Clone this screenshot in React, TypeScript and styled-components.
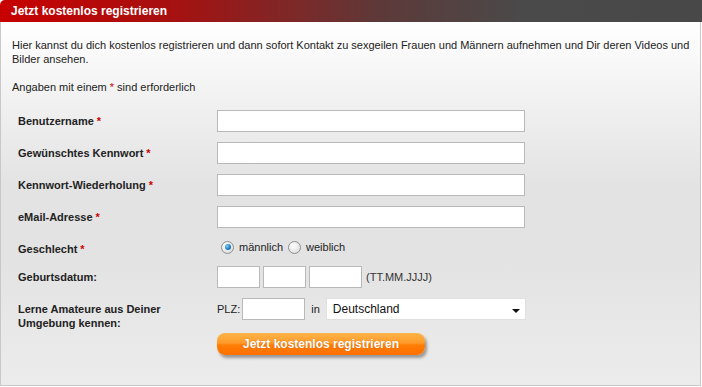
import React from 'react'
import styled, { createGlobalStyle } from 'styled-components'

const GlobalStyle = createGlobalStyle`
  html, body {
    margin: 0;
    padding: 0;
    background: #fff;
  }
  body {
    font-family: "Liberation Sans", Arial, sans-serif;
    font-size: 11px;
    color: #222;
  }
`

const Panel = styled.div`
  width: 702px;
  height: 387px;
  display: flex;
  flex-direction: column;
`

const Header = styled.div`
  height: 22px;
  padding-left: 11px;
  display: flex;
  align-items: center;
  border-top-left-radius: 5px;
  background: linear-gradient(to right, #c80000 0%, #a61111 25%, #5c3a3a 55%, #4a4a4a 75%, #484848 100%);
  color: #fff;
  font-weight: bold;
  font-size: 12px;
`

const Body = styled.div`
  flex: 1;
  margin-right: 1px;
  margin-bottom: 1px;
  border: 1px solid #c8c8c8;
  border-top: none;
  background: linear-gradient(to bottom, #ffffff 0%, #f2f2f2 20%, #e3e3e3 45%, #e3e3e3 65%, #ececec 100%);
  padding: 16px 11px 0 11px;
`

const Intro = styled.p`
  margin: 0 0 14px 0;
  line-height: 14px;
  width: 680px;
`

const Required = styled.span`
  color: #cc0000;
  margin-left: 3px;
`

const Note = styled.p`
  margin: 0 0 16px 0;
  line-height: 14px;
`

const FormGrid = styled.div`
  display: grid;
  grid-template-columns: 199px 1fr;
  row-gap: 10px;
  margin-left: 6px;
`

const Label = styled.div<{ $top?: number }>`
  font-weight: bold;
  line-height: 14px;
  display: flex;
  align-items: ${p => (p.$top !== undefined ? 'flex-start' : 'center')};
  padding-top: ${p => p.$top ?? 0}px;
`

const Field = styled.div<{ $start?: boolean }>`
  display: flex;
  align-items: center;
  align-self: ${p => (p.$start ? 'start' : 'stretch')};
`

const TextInput = styled.input<{ $w: number }>`
  box-sizing: border-box;
  width: ${p => p.$w}px;
  height: 22px;
  border: 1px solid #b9b9b9;
  background: #fff;
  margin: 0;
  padding: 0 3px;
  font: inherit;
`

const RadioRow = styled.div`
  height: 18px;
  display: flex;
  align-items: center;
  padding-left: 4px;
`

const RadioDot = styled.span<{ $checked?: boolean }>`
  box-sizing: border-box;
  width: 13px;
  height: 13px;
  border-radius: 50%;
  border: 1px solid #8e8f8f;
  background: radial-gradient(circle at 40% 35%, #ffffff 0%, #e6e6e6 60%, #cfcfcf 100%);
  display: flex;
  align-items: center;
  justify-content: center;
  margin-right: 5px;
  &::after {
    content: '';
    display: ${p => (p.$checked ? 'block' : 'none')};
    width: 6px;
    height: 6px;
    border-radius: 50%;
    background: radial-gradient(circle at 35% 35%, #7fd0f5 0%, #1b7fc0 55%, #0c4f86 100%);
  }
`

const RadioLabel = styled.span`
  margin-right: 5px;
`

const DateRow = styled.div`
  display: flex;
  align-items: center;
  gap: 3px;
`

const Hint = styled.span`
  margin-left: 1px;
  color: #333;
`

const Small = styled.span`
  margin: 0 2px 0 0;
`

const InWord = styled.span`
  margin: 0 6px 0 6px;
`

const SelectBox = styled.div`
  box-sizing: border-box;
  width: 200px;
  height: 22px;
  background: #fff;
  border: 1px solid #e0e0e0;
  display: flex;
  align-items: center;
  justify-content: space-between;
  padding: 0 5px 0 6px;
  font-size: 12px;
  color: #111;
`

const Arrow = styled.span`
  width: 0;
  height: 0;
  border-left: 4px solid transparent;
  border-right: 4px solid transparent;
  border-top: 4px solid #111;
  margin-top: 3px;
`

const SubmitButton = styled.button`
  width: 208px;
  height: 22px;
  margin-top: -7px;
  border: none;
  border-radius: 8px;
  background: linear-gradient(to bottom, #ffb54a 0%, #ff9a2a 45%, #ff7d05 55%, #ff7000 100%);
  box-shadow: 2px 3px 3px rgba(0, 0, 0, 0.35);
  color: #fff;
  font-family: "Liberation Sans", Arial, sans-serif;
  font-weight: bold;
  font-size: 12px;
  text-shadow: 0 0 1px rgba(140, 60, 0, 0.5);
  padding: 0;
  cursor: pointer;
`

const rows = ['Benutzername', 'Gewünschtes Kennwort', 'Kennwort-Wiederholung', 'eMail-Adresse']

const App = () => {
  return (
    <>
      <GlobalStyle />
      <Panel>
        <Header>Jetzt kostenlos registrieren</Header>
        <Body>
          <Intro>
            Hier kannst du dich kostenlos registrieren und dann sofort Kontakt zu sexgeilen Frauen und Männern aufnehmen und Dir deren Videos und Bilder ansehen.
          </Intro>
          <Note>
            Angaben mit einem<Required>*</Required> sind erforderlich
          </Note>
          <FormGrid>
            {rows.map(r => (
              <React.Fragment key={r}>
                <Label>
                  {r}
                  <Required>*</Required>
                </Label>
                <Field>
                  <TextInput $w={308} />
                </Field>
              </React.Fragment>
            ))}
            <Label $top={4}>
              Geschlecht<Required>*</Required>
            </Label>
            <RadioRow>
              <RadioDot $checked />
              <RadioLabel>männlich</RadioLabel>
              <RadioDot />
              <RadioLabel>weiblich</RadioLabel>
            </RadioRow>
            <Label>Geburtsdatum:</Label>
            <DateRow>
              <TextInput $w={43} />
              <TextInput $w={43} />
              <TextInput $w={53} />
              <Hint>(TT.MM.JJJJ)</Hint>
            </DateRow>
            <Label $top={4}>
              Lerne Amateure aus Deiner
              <br />
              Umgebung kennen:
            </Label>
            <Field $start>
              <Small>PLZ:</Small>
              <TextInput $w={63} />
              <InWord>in</InWord>
              <SelectBox>
                Deutschland
                <Arrow />
              </SelectBox>
            </Field>
            <div />
            <Field>
              <SubmitButton>Jetzt kostenlos registrieren</SubmitButton>
            </Field>
          </FormGrid>
        </Body>
      </Panel>
    </>
  )
}

export default App
